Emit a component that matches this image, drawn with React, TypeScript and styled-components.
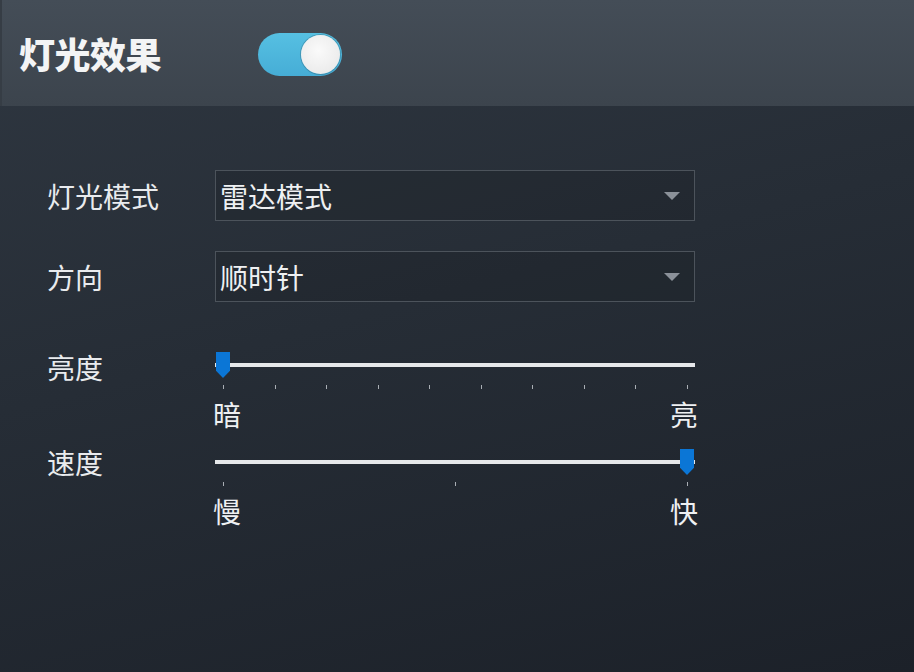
import React from 'react';
import styled, { createGlobalStyle } from 'styled-components';

const GlobalStyle = createGlobalStyle`
  html, body {
    margin: 0;
    padding: 0;
    width: 914px;
    height: 672px;
    overflow: hidden;
    font-family: "Noto Sans CJK SC", "Noto Sans", sans-serif;
  }
`;

const Page = styled.div`
  width: 914px;
  height: 672px;
  display: flex;
  flex-direction: column;
  background: linear-gradient(165deg, #2f3741 0%, #262d36 45%, #1c2129 100%);
  color: #e9ebee;
`;

const Header = styled.div`
  height: 106px;
  flex-shrink: 0;
  display: flex;
  align-items: center;
  padding-left: 17px;
  box-sizing: border-box;
  background: linear-gradient(180deg, #444d57 0%, #3c444d 100%);
  border-left: 2px solid #363d45;
`;

const Title = styled.h1`
  margin: 0;
  font-size: 36px;
  line-height: 40px;
  font-weight: 900;
  color: #f3f4f5;
  letter-spacing: -0.5px;
`;

const Toggle = styled.div<{ $on: boolean }>`
  margin-left: 97px;
  margin-top: 2px;
  width: 84px;
  height: 43px;
  border-radius: 22px;
  box-sizing: border-box;
  padding: 2px;
  display: flex;
  justify-content: ${p => (p.$on ? 'flex-end' : 'flex-start')};
  background: linear-gradient(180deg, #56c0e2 0%, #46add6 100%);
`;

const Knob = styled.div`
  width: 39px;
  height: 39px;
  border-radius: 50%;
  background: radial-gradient(circle at 45% 40%, #fafafa 0%, #ececec 70%, #dcdcdc 100%);
  box-shadow: 0 0 0 1px rgba(40, 90, 110, 0.35);
`;

const Body = styled.div`
  padding: 64px 0 0 47px;
  display: grid;
  grid-template-columns: 168px 480px;
  row-gap: 30px;
  align-items: center;
`;

const Label = styled.div<{ $offset?: number }>`
  font-size: 28px;
  line-height: 30px;
  color: #e9ebee;
  align-self: ${p => (p.$offset !== undefined ? 'start' : 'center')};
  margin-top: ${p => p.$offset ?? 0}px;
`;

const Select = styled.div`
  height: 51px;
  box-sizing: border-box;
  border: 1px solid #4c535b;
  background: rgba(22, 27, 33, 0.25);
  display: flex;
  align-items: center;
  justify-content: space-between;
  padding: 0 14px 0 4px;
  font-size: 28px;
  color: #eef0f2;
`;

const Caret = styled.span`
  width: 0;
  height: 0;
  border-left: 8px solid transparent;
  border-right: 8px solid transparent;
  border-top: 8px solid #8b9199;
`;

const SliderBlock = styled.div<{ $offset: number }>`
  display: flex;
  flex-direction: column;
  margin-top: ${p => p.$offset}px;
`;

const TrackArea = styled.div`
  position: relative;
  height: 30px;
  display: flex;
  align-items: center;
`;

const Track = styled.div`
  width: 100%;
  height: 4px;
  background: #e6e8ea;
`;

const Thumb = styled.div`
  position: absolute;
  top: 2px;
  width: 14px;
  height: 26px;
  background: #0b76d6;
  clip-path: polygon(0 0, 100% 0, 100% 72%, 50% 100%, 0 72%);
`;

const Ticks = styled.div`
  display: flex;
  justify-content: space-between;
  padding: 0 7px 0 8px;
  margin-top: 5px;
  height: 4px;
`;

const Tick = styled.span`
  width: 1px;
  height: 4px;
  background: #a9aeb4;
`;

const Ends = styled.div`
  display: flex;
  justify-content: space-between;
  font-size: 28px;
  line-height: 34px;
  margin-top: 8px;
  margin-left: -2px;
  margin-right: -3px;
  color: #eef0f2;
`;

type SliderProps = { value: number; ticks: number; min: string; max: string; offset: number };

const Slider = ({ value, ticks, min, max, offset }: SliderProps) => (
  <SliderBlock $offset={offset}>
    <TrackArea>
      <Track />
      <Thumb style={{ left: `${(value / 100) * 464 + 1}px` }} />
    </TrackArea>
    <Ticks>
      {Array.from({ length: ticks }).map((_, i) => (
        <Tick key={i} />
      ))}
    </Ticks>
    <Ends>
      <span>{min}</span>
      <span>{max}</span>
    </Ends>
  </SliderBlock>
);

const App = () => {
  return (
    <>
      <GlobalStyle />
      <Page>
        <Header>
          <Title>灯光效果</Title>
          <Toggle $on>
            <Knob />
          </Toggle>
        </Header>
        <Body>
          <Label>灯光模式</Label>
          <Select>
            <span>雷达模式</span>
            <Caret />
          </Select>
          <Label>方向</Label>
          <Select>
            <span>顺时针</span>
            <Caret />
          </Select>
          <Label $offset={20}>亮度</Label>
          <Slider value={0} ticks={10} min="暗" max="亮" offset={18} />
          <Label $offset={-14}>速度</Label>
          <Slider value={100} ticks={3} min="慢" max="快" offset={-14} />
        </Body>
      </Page>
    </>
  );
};

export default App;
